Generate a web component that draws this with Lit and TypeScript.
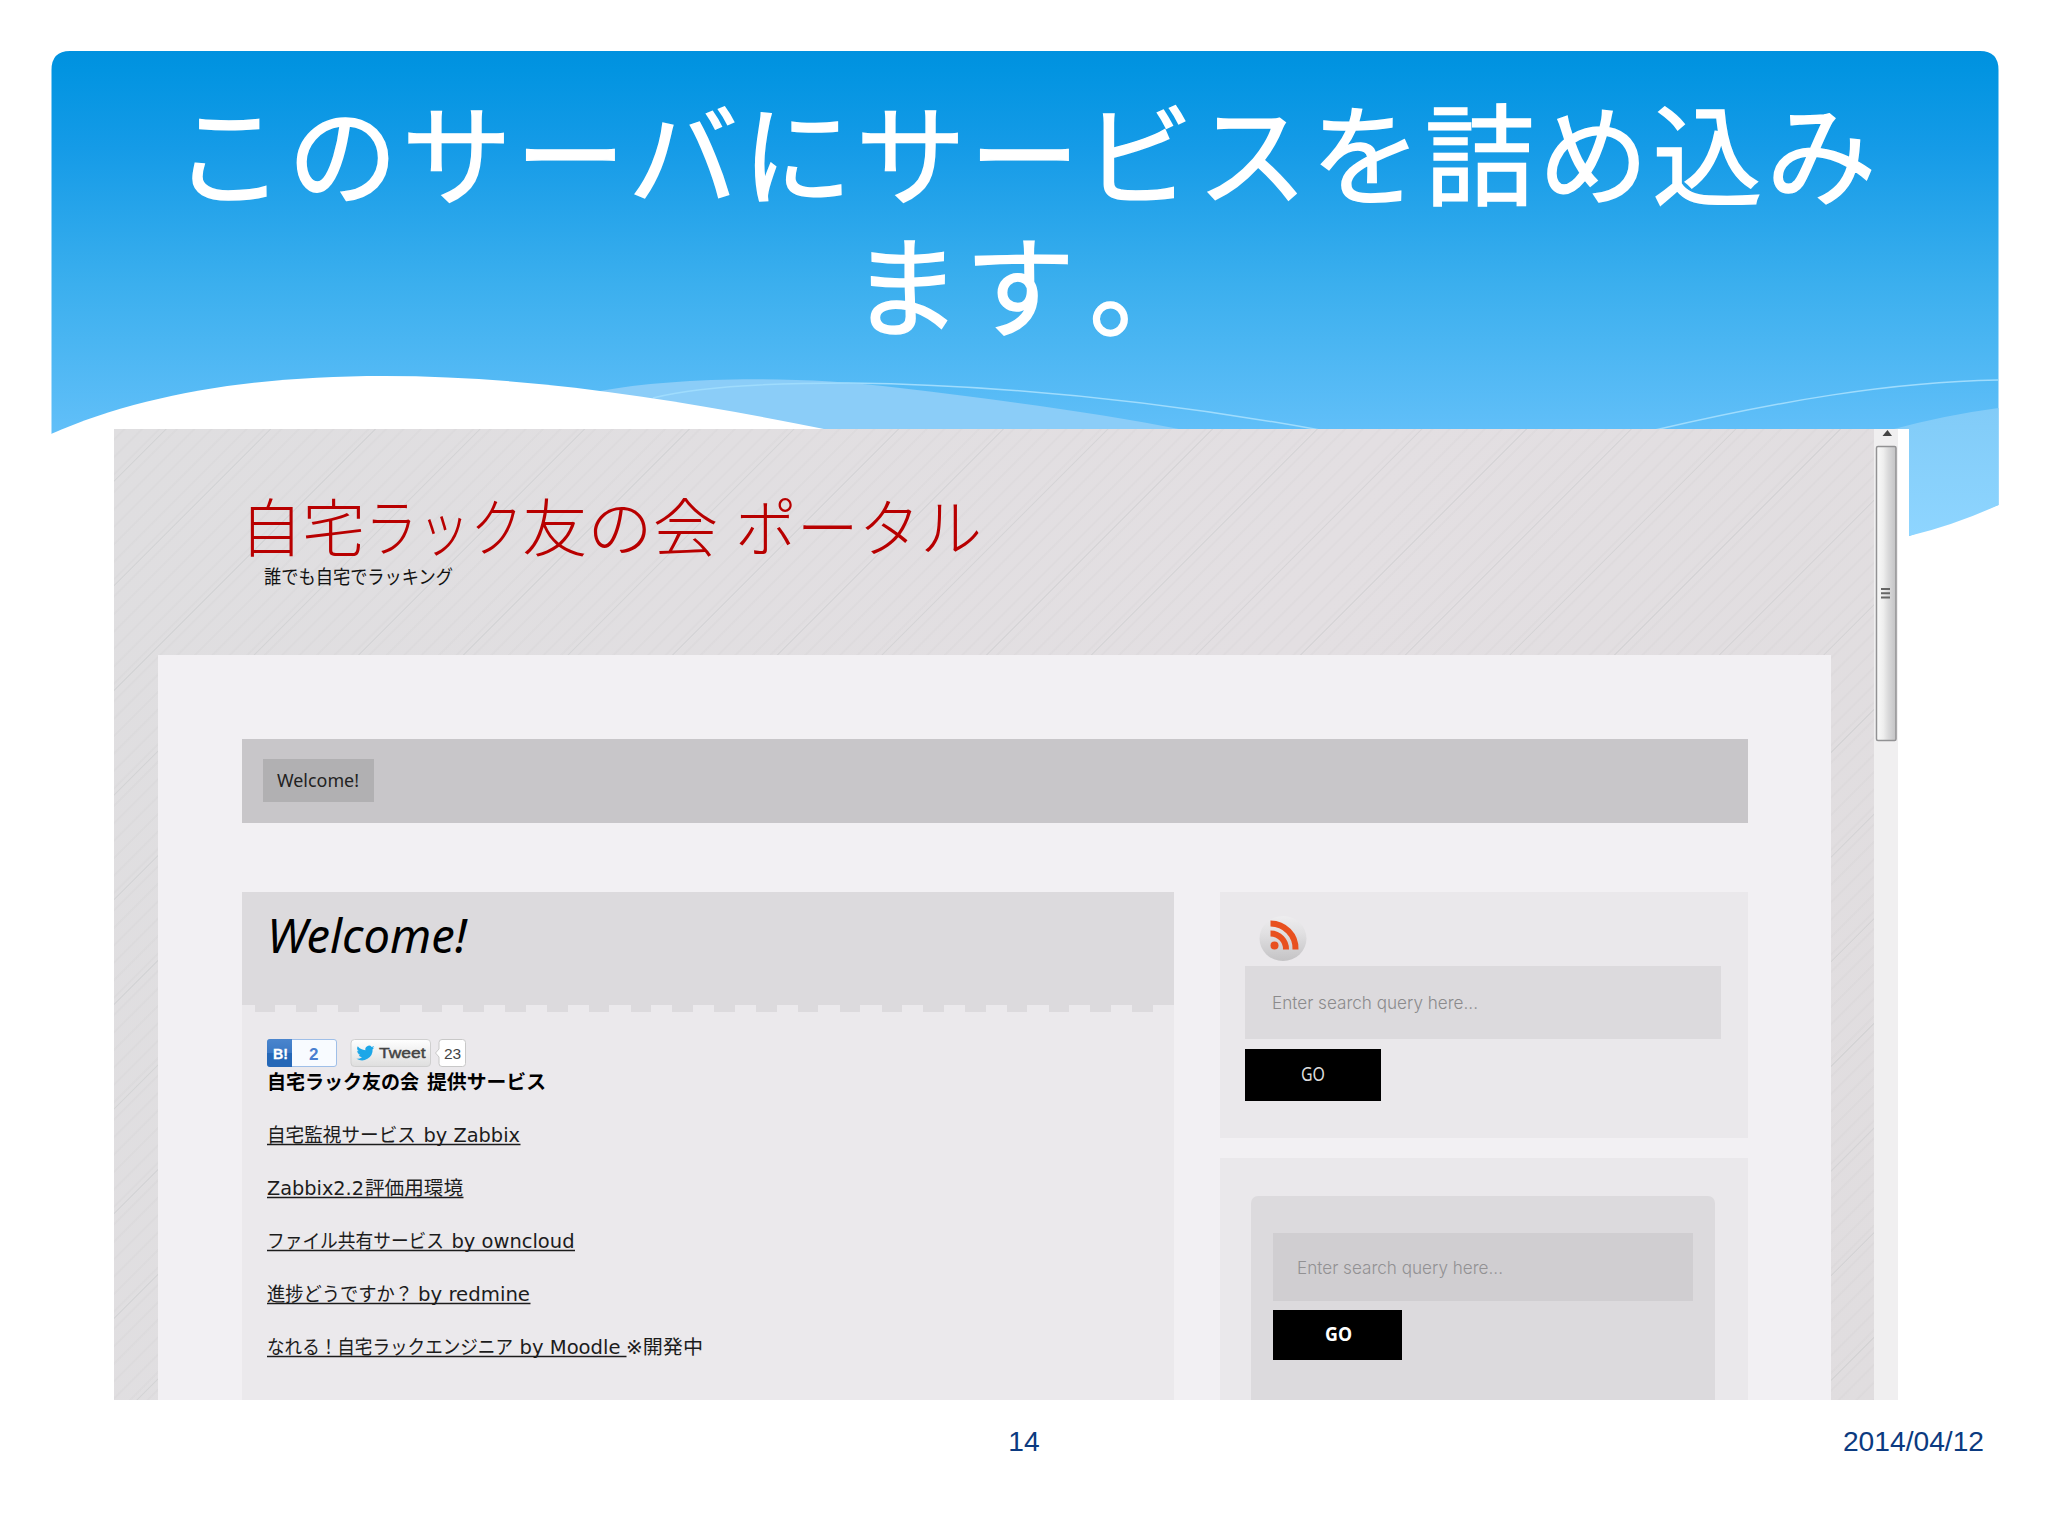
import { LitElement, html, css, svg } from "lit";
import { customElement, property } from "lit/decorators.js";

interface Run { t: string; x: number; w: number; }

/** A line of text whose runs are fitted to given widths. */
@customElement("fit-line")
class FitLine extends LitElement {
  @property({ attribute: false }) runs: Run[] = [];
  @property({ type: Number }) width = 100;
  @property({ type: Number }) height = 20;
  @property({ type: Number }) base = 16;
  @property({ type: Number }) underline = 0;
  static styles = css`
    :host { display: block; line-height: 0; }
    svg { display: block; overflow: visible; }
    text { fill: currentColor; white-space: pre; }
    .rule { stroke: currentColor; stroke-width: 1.4; }
  `;
  render() {
    return html`<svg width=${this.width} height=${this.height}>
      ${this.runs.map((r) => svg`<text x=${r.x} y=${this.base} textLength=${r.w} lengthAdjust="spacingAndGlyphs">${r.t}</text>`)}
      ${this.underline ? svg`<line class="rule" x1="0" x2=${this.underline} y1=${this.base + 2.5} y2=${this.base + 2.5}/>` : ""}
    </svg>`;
  }
}

const line = (cls: string, runs: Run[], width: number, height: number, base: number, underline = 0) =>
  html`<fit-line class=${cls} .runs=${runs} .width=${width} .height=${height} .base=${base} .underline=${underline}></fit-line>`;

const links: { runs: Run[]; u: number }[] = [
  { runs: [{ t: "自宅監視サービス", x: 0, w: 149 }, { t: "by Zabbix", x: 156.5, w: 96.5 }], u: 253.5 },
  { runs: [{ t: "Zabbix2.2", x: 0, w: 97 }, { t: "評価用環境", x: 98, w: 98 }], u: 196.5 },
  { runs: [{ t: "ファイル共有サービス", x: 0, w: 177 }, { t: "by owncloud", x: 184.5, w: 123 }], u: 308 },
  { runs: [{ t: "進捗どうですか？", x: 0, w: 146 }, { t: "by redmine", x: 151, w: 112 }], u: 263.5 },
  { runs: [{ t: "なれる！自宅ラックエンジニア", x: 0, w: 246 }, { t: "by Moodle", x: 252.5, w: 101 }, { t: "※開発中", x: 359, w: 77 }], u: 359.5 },
];

@customElement("app-root")
class AppRoot extends LitElement {
  static styles = css`
    :host { display: block; width: 2048px; height: 1536px; overflow: hidden; background: #fff;
      font-family: "Liberation Sans", "Noto Sans CJK JP", sans-serif; }
    * { box-sizing: border-box; }
    .slide { position: relative; height: 1536px; display: flex; flex-direction: column; }
    .art { position: absolute; left: 0; top: 0; }
    .title { position: relative; height: 429px; padding: 83px 0 0 6px; margin: 0; text-align: center; color: #fff;
      font: 400 110px/132px "Noto Sans CJK JP", sans-serif; letter-spacing: 3.8px; -webkit-text-stroke: 1.5px #fff; }
    .stop { margin-left: 10px; }
    .shot { position: relative; margin-left: 114px; width: 1795px; height: 971px; display: flex; background: #fff; }
    .page { width: 1760px; height: 971px; padding: 0 43px 0 44px; overflow: hidden;
      background:
        repeating-linear-gradient(135deg, transparent 0 36px, rgba(140,150,150,.14) 36.5px 37.2px, transparent 37.7px 74px),
        repeating-linear-gradient(135deg, transparent 0 6px, rgba(150,150,150,.05) 7px 8px, transparent 9px 12.33px),
        linear-gradient(110deg, #dfdee0, #e3dfe2 60%, #e0dddf); }
    .brand { height: 225.5px; padding: 58px 0 0 89px; }
    .site { color: #b80000; font: 300 63px "Noto Sans CJK JP", sans-serif; }
    .sub { margin: 5px 0 0 17px; color: #111; font: 400 19px "Noto Sans CJK JP", sans-serif; }
    .sheet { height: 746px; background: #f2f0f3; padding: 84px 83.5px 0 84px; }
    .nav { height: 84.5px; background: #c8c6c9; padding: 20.5px 21px; display: flex; }
    .tab { width: 111px; height: 43px; background: #b1b0b2; padding: 8px 14px; color: #222;
      font: 400 18.5px "Noto Sans", sans-serif; }
    .cols { display: flex; gap: 46px; margin-top: 69px; }
    .main { width: 932.5px; height: 508px; background: #ebe9ec; }
    .head { height: 113px; background: #dcdadd; padding: 21px 0 0 25px; color: #000; font: italic 400 47px "Noto Sans", sans-serif; }
    .teeth { height: 6.5px; background: repeating-linear-gradient(90deg, transparent 0 12.5px, #dcdadd 12.5px 33px, transparent 33px 41.8px); }
    .post { padding: 27px 25px; color: #1c1c1c; }
    .social { display: block; height: 28px; }
    .lead { color: #000; margin-top: 3px; font: 700 19.5px "Noto Sans CJK JP", sans-serif; }
    .links { margin-top: 27px; display: flex; flex-direction: column; gap: 25px;
      font: 400 19.6px "DejaVu Sans", "Noto Sans CJK JP", sans-serif; }
    .side { width: 528px; display: flex; flex-direction: column; gap: 20.5px; }
    .card { background: #eae8eb; height: 245.5px; padding: 21.5px 26.5px 0 25.5px; }
    .card.two { height: 242px; padding: 37.5px 32.5px 0 31.5px; }
    .rss { display: block; margin: 0 0 4px 13px; }
    .field { background: #dcdadd; height: 73.5px; padding: 27px 26.5px; color: #8b8a8c;
      font: 300 17.8px Inter, "Noto Sans", sans-serif; }
    .go { background: #000; width: 135.5px; height: 51.5px; margin-top: 10px; padding: 13.5px 56px; color: #ddd;
      font: 400 19px "Noto Sans", sans-serif; }
    .inner { background: #dcdadd; border-radius: 7px 7px 0 0; height: 205px; padding: 37px 22px 0 21.5px; }
    .inner .field { background: #d0ced1; height: 68px; padding: 25px 24px; color: #929193; }
    .inner .go { width: 129px; height: 50px; margin-top: 9px; padding: 13.5px 52px; color: #fff; font-weight: 700; }
    .scroll { display: block; width: 24px; height: 971px; background: #f0eff0; }
    .foot { display: grid; grid-template-columns: 1fr 1fr 1fr; padding: 24px 64px 0; color: #0b3a80; font-size: 28.2px; line-height: 34px; }
    .foot span:nth-child(2) { text-align: center; }
    .foot span:nth-child(3) { text-align: right; }
  `;

  render() {
    return html`<div class="slide">
      <svg class="art" width="2048" height="600" viewBox="0 0 2048 600">
        <defs>
          <linearGradient id="sky" x1="0" y1="51" x2="0" y2="440" gradientUnits="userSpaceOnUse">
            <stop offset="0" stop-color="#0091df"/><stop offset=".05" stop-color="#0294e1"/><stop offset=".25" stop-color="#159be7"/>
            <stop offset=".6" stop-color="#3bafee"/><stop offset="1" stop-color="#63c0f9"/>
          </linearGradient>
          <linearGradient id="pale" x1="0" y1="380" x2="0" y2="536" gradientUnits="userSpaceOnUse">
            <stop offset="0" stop-color="#80c8f6"/><stop offset=".3" stop-color="#83cdf9"/><stop offset="1" stop-color="#8ed5ff"/>
          </linearGradient>
        </defs>
        <path fill="url(#sky)" d="M51.5 434V70Q51.5 51 70 51H1980Q1998.5 51 1998.5 70V505L1909 536V440H51.5Z"/>
        <path fill="#8bcdf8" d="M600 391C670 378 790 374 900 388C1000 400 1100 413 1184 430H700Z"/>
        <path fill="url(#pale)" d="M1890 430Q1945 415 1998.5 408V505Q1955 525 1909 536V430Z"/>
        <path fill="none" stroke="#9fdcfd" stroke-width="1.5" d="M653 398C700 386 770 383 849 383C1010 385 1160 401 1320 430M1655 430C1780 401 1890 382 1998 380"/>
        <path fill="#fff" d="M51 434C140 395 250 376 384 376C545 376 700 404 829 430V442H51Z"/>
      </svg>
      <h1 class="title">このサーバにサービスを詰め込み<br>ます<span class="stop">。</span></h1>
      <div class="shot">
        <div class="page">
          <div class="brand">
            ${line("site", [{ t: "自宅", x: -7, w: 125 }, { t: "ラック", x: 118, w: 158 }, { t: "友の会", x: 275, w: 196 }, { t: "ポータル", x: 488, w: 247 }], 740, 74, 64)}
            ${line("sub", [{ t: "誰でも自宅でラッキング", x: 0, w: 189 }], 190, 24, 18)}
          </div>
          <div class="sheet">
            <div class="nav"><div class="tab">${line("", [{ t: "Welcome!", x: 0, w: 82 }], 83, 26, 20)}</div></div>
            <div class="cols">
              <div class="main">
                <div class="head">${line("", [{ t: "Welcome!", x: 0, w: 200 }], 200, 56, 40)}</div>
                <div class="teeth"></div>
                <div class="post">
                  <svg class="social" width="200" height="28" viewBox="0 0 200 28">
                    <defs>
                      <linearGradient id="hb" x2="0" y2="1"><stop stop-color="#4a85cd"/><stop offset=".5" stop-color="#3a78c5"/><stop offset=".5" stop-color="#2467b7"/><stop offset="1" stop-color="#2467b7"/></linearGradient>
                      <linearGradient id="tw" x2="0" y2="1"><stop stop-color="#fff"/><stop offset="1" stop-color="#dedede"/></linearGradient>
                    </defs>
                    <rect x=".5" y=".5" width="69" height="27" rx="2.5" fill="#f8fbff" stroke="#9fbfe8"/>
                    <path d="M3 0H25V28H3Q0 28 0 25V3Q0 0 3 0Z" fill="url(#hb)"/>
                    <text x="6" y="19.5" fill="#fff" stroke="#fff" stroke-width=".3" font-family="Liberation Sans" font-weight="700" font-size="15" textLength="15" lengthAdjust="spacingAndGlyphs">B!</text>
                    <text x="42" y="20.5" fill="#4a7fd0" font-family="Liberation Sans" font-weight="700" font-size="17">2</text>
                    <rect x="84" y=".5" width="79.5" height="27" rx="3.5" fill="url(#tw)" stroke="#cfcfcf"/>
                    <g transform="translate(89.5 6.5) scale(.75)"><path fill="#1da7e8" d="M24 2.6a10 10 0 0 1-2.8.8 5 5 0 0 0 2.2-2.7 10 10 0 0 1-3.1 1.2 4.9 4.9 0 0 0-8.4 4.5A14 14 0 0 1 1.7 1.1a4.9 4.9 0 0 0 1.5 6.6 5 5 0 0 1-2.2-.6 4.9 4.9 0 0 0 3.9 4.9 5 5 0 0 1-2.2.1 4.9 4.9 0 0 0 4.6 3.4A9.9 9.9 0 0 1 0 17.5 14 14 0 0 0 21.5 5z"/></g>
                    <text x="112" y="19" fill="#444" stroke="#444" stroke-width=".45" font-family="Liberation Sans" font-size="15.5" textLength="46.5" lengthAdjust="spacingAndGlyphs">Tweet</text>
                    <path d="M175 .5H195.5Q198.500 .5 198.500 3.500V24.500Q198.500 27.500 195.500 27.500H175Q172 27.500 172 24.500V18L168.500 14L172 10V3.500Q172 .5 175 .5Z" fill="#fff" stroke="#c8c8c8"/>
                    <text x="177" y="19.5" fill="#444" font-family="Liberation Sans" font-size="15.5">23</text>
                  </svg>
                  ${line("lead", [{ t: "自宅ラック友の会", x: 0, w: 152 }, { t: "提供サービス", x: 160, w: 119 }], 280, 25, 19)}
                  <div class="links">
                    ${links.map((l) => line("", l.runs, 440, 28, 20, l.u))}
                  </div>
                </div>
              </div>
              <div class="side">
                <div class="card">
                  <svg class="rss" width="49" height="48" viewBox="0 0 49 48">
                    <defs><linearGradient id="ball" x2="0" y2="1"><stop offset="0" stop-color="#eeedef"/><stop offset=".4" stop-color="#e0dfe1"/><stop offset="1" stop-color="#c4c3c5"/></linearGradient></defs>
                    <ellipse cx="25" cy="24.5" rx="23.5" ry="22.5" fill="url(#ball)"/>
                    <circle cx="16.5" cy="31.5" r="4" fill="#e8501f"/>
                    <path fill="none" stroke="#e8501f" stroke-width="6" d="M12.5 19.5A15.5 15.5 0 0 1 28 35.5M12.5 9.5A25 25 0 0 1 37.5 35.5"/>
                  </svg>
                  <div class="field">${line("", [{ t: "Enter search query here...", x: 0, w: 206 }], 210, 24, 16)}</div>
                  <div class="go">${line("", [{ t: "GO", x: 0, w: 24 }], 26, 22, 18)}</div>
                </div>
                <div class="card two">
                  <div class="inner">
                    <div class="field">${line("", [{ t: "Enter search query here...", x: 0, w: 206 }], 210, 24, 16)}</div>
                    <div class="go">${line("", [{ t: "GO", x: 0, w: 27 }], 28, 22, 18)}</div>
                  </div>
                </div>
              </div>
            </div>
          </div>
        </div>
        <svg class="scroll" width="24" height="971" viewBox="0 0 24 971">
          <defs><linearGradient id="thumb" x2="1"><stop stop-color="#fafafa"/><stop offset=".35" stop-color="#eee"/><stop offset=".6" stop-color="#dadadb"/><stop offset="1" stop-color="#c2c2c4"/></linearGradient></defs>
          <path d="M8.5 7L13.5 1L18 7Z" fill="#444"/>
          <rect x="2.5" y="17.5" width="19.5" height="294" rx="1.5" fill="url(#thumb)" stroke="#929294" stroke-width="1.5"/>
          <path d="M7 160h9M7 164.300h9M7 168.600h9" stroke="#666" stroke-width="2"/>
        </svg>
      </div>
      <div class="foot"><span></span><span>14</span><span>2014/04/12</span></div>
    </div>`;
  }
}
